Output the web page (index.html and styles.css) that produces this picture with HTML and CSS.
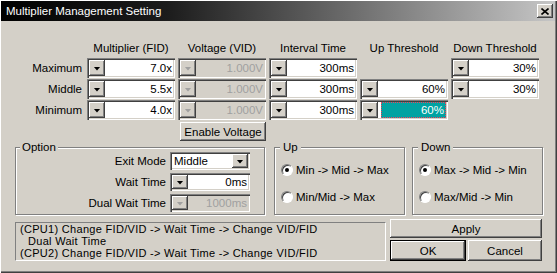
FILE: index.html
```html
<!DOCTYPE html>
<html lang="en">
<head>
  <meta charset="UTF-8">
  <title>Multiplier Management Setting</title>
  <link rel="stylesheet" href="styles.css">
</head>
<body>
  <div class="window">
    <div class="titlebar">
      <span class="title">Multiplier Management Setting</span>
      <span class="close">
        <svg width="8" height="7" viewBox="0 0 8 7"><path d="M0.5 0.5 L7.5 6.5 M7.5 0.5 L0.5 6.5" stroke="#000" stroke-width="1.6" fill="none"/></svg>
      </span>
    </div>

    <div class="content">
      <!-- multiplier table -->
      <div class="table">
        <span></span>
        <span class="head">Multiplier (FID)</span>
        <span class="head">Voltage (VID)</span>
        <span class="head">Interval Time</span>
        <span class="head">Up Threshold</span>
        <span class="head">Down Threshold</span>

        <span class="rowlabel">Maximum</span>
        <div class="spin"><span class="drop"><i class="arrow"></i></span><span class="val">7.0x</span></div>
        <div class="spin disabled"><span class="drop"><i class="arrow"></i></span><span class="val">1.000V</span></div>
        <div class="spin"><span class="drop"><i class="arrow"></i></span><span class="val">300ms</span></div>
        <span></span>
        <div class="spin"><span class="drop"><i class="arrow"></i></span><span class="val">30%</span></div>

        <span class="rowlabel">Middle</span>
        <div class="spin"><span class="drop"><i class="arrow"></i></span><span class="val">5.5x</span></div>
        <div class="spin disabled"><span class="drop"><i class="arrow"></i></span><span class="val">1.000V</span></div>
        <div class="spin"><span class="drop"><i class="arrow"></i></span><span class="val">300ms</span></div>
        <div class="spin"><span class="drop"><i class="arrow"></i></span><span class="val">60%</span></div>
        <div class="spin"><span class="drop"><i class="arrow"></i></span><span class="val">30%</span></div>

        <span class="rowlabel">Minimum</span>
        <div class="spin"><span class="drop"><i class="arrow"></i></span><span class="val">4.0x</span></div>
        <div class="spin disabled"><span class="drop"><i class="arrow"></i></span><span class="val">1.000V</span></div>
        <div class="spin"><span class="drop"><i class="arrow"></i></span><span class="val">300ms</span></div>
        <div class="spin"><span class="drop"><i class="arrow"></i></span><span class="val sel">60%</span></div>

        <button class="btn enable">Enable Voltage</button>
      </div>

      <!-- option groups -->
      <div class="groups">
        <fieldset class="group option">
          <legend>Option</legend>
          <div class="option-grid">
            <span class="optlabel">Exit Mode</span>
            <div class="combo"><span class="val">Middle</span><span class="drop"><i class="arrow"></i></span></div>
            <span class="optlabel">Wait Time</span>
            <div class="spin small"><span class="drop"><i class="arrow"></i></span><span class="val">0ms</span></div>
            <span class="optlabel">Dual Wait Time</span>
            <div class="spin small disabled"><span class="drop"><i class="arrow"></i></span><span class="val">1000ms</span></div>
          </div>
        </fieldset>

        <fieldset class="group updown up">
          <legend>Up</legend>
          <label class="radio-row"><span class="radio on"></span>Min -&gt; Mid -&gt; Max</label>
          <label class="radio-row"><span class="radio"></span>Min/Mid -&gt; Max</label>
        </fieldset>

        <fieldset class="group updown down">
          <legend>Down</legend>
          <label class="radio-row"><span class="radio on"></span>Max -&gt; Mid -&gt; Min</label>
          <label class="radio-row"><span class="radio"></span>Max/Mid -&gt; Min</label>
        </fieldset>
      </div>

      <!-- info + buttons -->
      <div class="bottom">
        <div class="info">
          <div>(CPU1) Change FID/VID -&gt; Wait Time -&gt; Change VID/FID</div>
          <div class="indent">Dual Wait Time</div>
          <div>(CPU2) Change FID/VID -&gt; Wait Time -&gt; Change VID/FID</div>
        </div>
        <div class="actions">
          <button class="btn apply">Apply</button>
          <div class="actions-row">
            <button class="btn default">OK</button>
            <button class="btn">Cancel</button>
          </div>
        </div>
      </div>
    </div>
  </div>
</body>
</html>
```

FILE: styles.css
```css
* {
  box-sizing: border-box;
}
body {
  margin: 0;
  font-family: "Liberation Sans", Arial, sans-serif;
  font-size: 11.5px;
  color: #000;
  background: #d4d0c8;
}
.window {
  width: 557px;
  height: 273px;
  background: #d4d0c8;
  padding: 1px 2px 0 1px;
  box-shadow: inset 1px 1px #fff, inset -1px -1px #404040, inset -2px -2px #808080;
}
.titlebar {
  height: 20px;
  display: flex;
  align-items: center;
  justify-content: space-between;
  padding: 0 2px 0 5px;
  color: #fff;
  background: linear-gradient(to right, #000 0%, #1c1c1c 30%, #c6c6c6 100%);
}
.close {
  width: 16px;
  height: 14px;
  display: flex;
  align-items: center;
  justify-content: center;
  background: #d4d0c8;
  box-shadow: inset -1px -1px #404040, inset 1px 1px #fff, inset -2px -2px #808080;
}
.close svg {
  display: block;
}
.content {
  padding: 17px 0 0 4px;
}

/* table */
.table {
  display: grid;
  grid-template-columns: 79px repeat(5, 88px);
  grid-template-rows: 19px 20px 20px 20px 20px;
  column-gap: 3px;
  row-gap: 1px;
}
.head {
  text-align: center;
  align-self: center;
  white-space: nowrap;
}
.rowlabel {
  text-align: right;
  padding-right: 2px;
  line-height: 20px;
}

/* spin / combo controls */
.spin, .combo {
  display: flex;
  height: 20px;
  padding: 2px;
  background: #fff;
  box-shadow: inset 1px 1px #808080, inset 2px 2px #404040, inset -1px -1px #fff, inset -2px -2px #d4d0c8;
}
.spin.small, .combo {
  height: 18px;
}
.drop {
  width: 16px;
  flex: none;
  display: flex;
  align-items: center;
  justify-content: center;
  padding-top: 1px;
  background: #d4d0c8;
  box-shadow: inset -1px -1px #404040, inset 1px 1px #fff, inset -2px -2px #808080;
}
.arrow {
  display: block;
  width: 7px;
  height: 4px;
  background: #000;
  clip-path: polygon(0 0, 7px 0, 3.5px 4px);
}
.val {
  flex: 1;
  text-align: right;
  padding-right: 1px;
  line-height: 16px;
  white-space: nowrap;
}
.spin.small .val, .combo .val {
  line-height: 14px;
}
.combo .val {
  text-align: left;
  padding-left: 2px;
}
.spin.disabled {
  background: #d4d0c8;
}
.spin.disabled .val {
  color: #a0a0a0;
}
.spin.disabled .arrow {
  background: #a0a0a0;
}
.val.sel {
  margin-left: 3px;
  background: #00a2a2;
  color: #fff;
  line-height: 14px;
  border: 1px dotted #f0405a;
}

/* buttons */
.btn {
  font: inherit;
  color: #000;
  border: none;
  padding: 0;
  background: #d4d0c8;
  box-shadow: inset -1px -1px #404040, inset 1px 1px #fff, inset -2px -2px #808080;
}
.enable {
  grid-column: 3;
  height: 19px;
  margin: 1px 0 0 2px;
}
.btn.default {
  border: 1px solid #000;
}

/* groups */
.groups {
  display: flex;
  margin-left: 10px;
}
.group {
  margin: 0;
  padding: 0;
  min-width: 0;
  height: 74px;
  border: 1px solid #808080;
  box-shadow: inset 1px 1px #fff, 1px 1px #fff;
}
.group legend {
  padding: 0 2px;
  margin-left: 4px;
  line-height: 12px;
  background: #d4d0c8;
}
.option {
  width: 250px;
}
.updown {
  width: 131px;
}
.up {
  margin-left: 9px;
}
.down {
  margin-left: 7px;
}
.updown legend {
  margin-left: 5px;
  padding: 0 3px;
}
.option-grid {
  display: grid;
  grid-template-columns: 1fr 80px;
  grid-template-rows: 18px 18px 18px;
  column-gap: 4px;
  row-gap: 3px;
  margin-top: -1px;
  padding-right: 14px;
}
.optlabel {
  text-align: right;
  line-height: 18px;
  white-space: nowrap;
}
.radio-row {
  display: flex;
  align-items: center;
  gap: 3px;
  height: 14px;
  padding-left: 6px;
  margin-top: 13px;
  white-space: nowrap;
}
.radio-row:first-of-type {
  margin-top: 10px;
}
.radio {
  position: relative;
  width: 12px;
  height: 12px;
  flex: none;
  border-radius: 50%;
  background: #fff;
  border: 1px solid;
  border-color: #808080 #fff #fff #808080;
  box-shadow: inset 1px 1px #404040;
}
.radio.on::after {
  content: "";
  position: absolute;
  left: 3px;
  top: 3px;
  width: 4px;
  height: 4px;
  border-radius: 50%;
  background: #000;
}

/* bottom */
.bottom {
  display: flex;
  margin-top: 4px;
}
.info {
  width: 371px;
  height: 39px;
  margin: 3px 0 0 10px;
  padding: 0 4px;
  font-size: 11px;
  letter-spacing: 0.3px;
  line-height: 12px;
  white-space: nowrap;
  border: 1px solid;
  border-color: #808080 #fff #fff #808080;
}
.info .indent {
  padding-left: 8px;
}
.actions {
  width: 152px;
  margin-left: 4px;
  display: flex;
  flex-direction: column;
  gap: 2px;
}
.apply {
  height: 19px;
}
.actions-row {
  display: flex;
  gap: 2px;
  height: 21px;
}
.actions-row .btn {
  flex: 1;
}
```
